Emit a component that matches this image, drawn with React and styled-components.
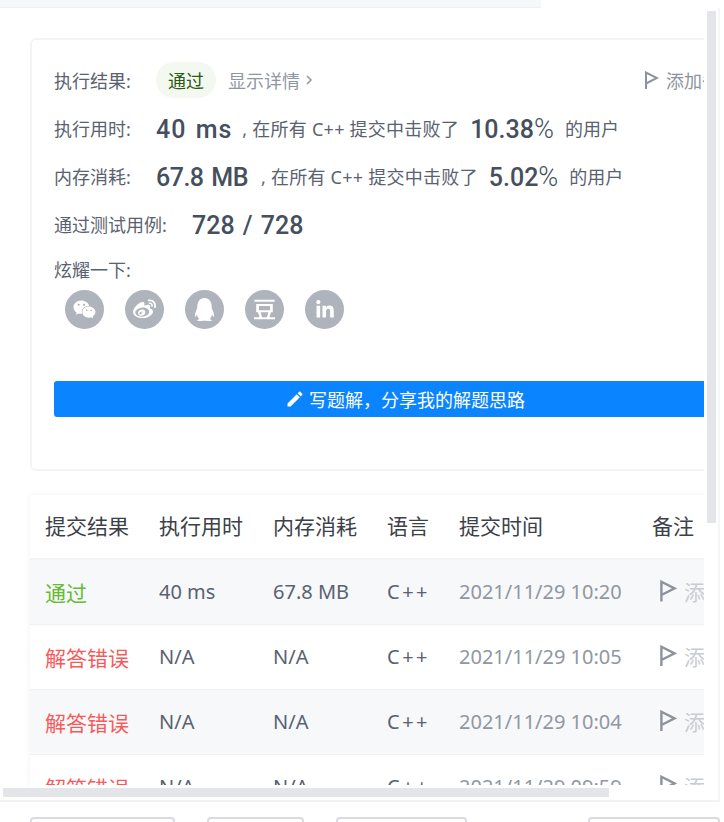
import styled, { createGlobalStyle } from "styled-components";
import { FaWeixin, FaWeibo, FaQq, FaLinkedinIn } from "react-icons/fa";
import { SiDouban } from "react-icons/si";
import { MdEdit } from "react-icons/md";

const Global = createGlobalStyle`
  html, body { margin: 0; padding: 0; background: #fff; }
  body { font-family: "Noto Sans", "Noto Sans CJK SC", sans-serif; overflow: hidden; }
  * { box-sizing: border-box; }
`;

const Page = styled.div`
  position: relative;
  width: 724px;
  height: 822px;
  overflow: hidden;
`;

const TopStrip = styled.div`
  width: 541px;
  height: 8px;
  background: #f7f8fa;
  border-bottom: 1px solid #eff0f2;
`;

const Panel = styled.div`
  width: 720px;
  height: 794px;
  border-right: 2px solid #f5f6f8;
  border-bottom: 2px solid #f2f3f5;
`;

const Scroller = styled.div`
  width: 704px;
  height: 777px;
  padding: 30px 0 0 30px;
  overflow: hidden;
`;

const Card = styled.section`
  width: 750px;
  height: 433px;
  padding: 20px 22px;
  border: 2px solid #f3f4f6;
  border-radius: 6px;
  color: #5a6270;
  font-size: 18px;
`;

const Row = styled.div`
  display: flex;
  align-items: center;
  height: 40px;
  margin-bottom: 8px;
  white-space: nowrap;
`;

const Label = styled.span`
  width: ${(p) => p.$w || 102}px;
  flex: none;
`;

const Pill = styled.span`
  display: inline-flex;
  align-items: center;
  justify-content: center;
  width: 60px;
  height: 36px;
  border-radius: 18px;
  background: #f3f8f0;
  color: #2c5a10;
`;

const Detail = styled.span`
  margin-left: 12px;
  color: #9097a1;
`;

const FlagNote = styled.span`
  display: inline-flex;
  align-items: center;
  gap: 7px;
  margin-left: auto;
  margin-right: 18px;
  color: #8d939c;
`;

const Big = styled.span`
  padding-top: 2px;
  font-family: Roboto, sans-serif;
  font-weight: 500;
  font-size: 25px;
  word-spacing: 2px;
  letter-spacing: ${(p) => p.$ls || 0}px;
  color: #454f5e;
`;

const Percent = styled(Big)`
  margin: 0 11px 0 11px;
`;

const PercentSign = styled.span`
  font-size: 27px;
  font-weight: 300;
`;

const Note = styled.span`
  margin-left: ${(p) => p.$gap || 10}px;
  letter-spacing: 0.25px;
`;

const Share = styled.div`
  margin-top: 11px;
  height: 30px;
  line-height: 30px;
`;

const Socials = styled.div`
  display: flex;
  gap: 21px;
  margin: 5px 0 0 11px;
`;

const Social = styled.span`
  display: flex;
  align-items: center;
  justify-content: center;
  width: 39px;
  height: 39px;
  border-radius: 50%;
  background: #aeb3bc;
  color: #fff;
  font-size: ${(p) => p.$size || 23}px;
`;

const WriteButton = styled.button`
  display: flex;
  align-items: center;
  justify-content: center;
  gap: 4px;
  width: 702px;
  height: 36px;
  margin-top: 52px;
  border: 0;
  border-radius: 3px;
  background: #0a84ff;
  color: #fff;
  font-family: inherit;
  font-size: 18px;
`;

const Table = styled.table`
  width: 750px;
  margin-top: 24px;
  border-collapse: collapse;
  table-layout: fixed;
  box-shadow: 0 0 6px rgba(0, 0, 0, 0.06);
  font-size: 20px;
  color: #5a6270;
`;

const Th = styled.th`
  height: 64px;
  padding: 0 0 3px 15px;
  width: ${(p) => p.$w}px;
  text-align: left;
  font-weight: 400;
  font-size: 21px;
  color: #3c4048;
  border-bottom: 2px solid #f3f4f6;
`;

const Tr = styled.tr`
  height: 65px;
  background: ${(p) => (p.$odd ? "#f7f8fa" : "#fff")};
  border-bottom: 1px solid #f0f1f3;
`;

const Td = styled.td`
  padding: 0 0 0 15px;
  white-space: nowrap;
  color: ${(p) => p.$color || "inherit"};
  font-size: ${(p) => (p.$status ? 21 : 20)}px;
  letter-spacing: ${(p) => (p.$spaced ? 2.5 : 0)}px;
`;

const TableFlag = styled.span`
  display: inline-flex;
  align-items: center;
  gap: 7px;
  padding-left: 7px;
  color: #c9ccd2;
  font-size: 21px;
`;

const VBar = styled.div`
  position: absolute;
  left: 707px;
  top: 11px;
  width: 9px;
  height: 512px;
  background: #e4e5e9;
`;

const HBar = styled.div`
  position: absolute;
  left: 3px;
  top: 788px;
  width: 606px;
  height: 9px;
  background: #e4e5e9;
`;

const Footer = styled.footer`
  display: flex;
  gap: 32px;
  width: 720px;
  height: 20px;
  padding: 15px 0 0 30px;
`;

const FootButton = styled.div`
  flex: none;
  width: ${(p) => p.$w}px;
  height: 30px;
  margin-left: ${(p) => (p.$end ? "auto" : "0")};
  border: 2px solid #d9dbe1;
  border-radius: 4px;
  background: #fff;
`;

const Flag = ({ size = 18, color = "#8d939c" }) => (
  <svg width={size} height={size * 1.2} viewBox="0 0 15 18" fill="none" stroke={color} strokeWidth="2">
    <path d="M2 18V1.5L13 7 2 12.5" />
  </svg>
);

const Chevron = styled.svg`
  width: 8px;
  height: 10px;
  margin-left: 5px;
`;

const rows = [
  { status: "通过", color: "#66bb33", time: "40 ms", mem: "67.8 MB", at: "2021/11/29 10:20" },
  { status: "解答错误", color: "#f85a5a", time: "N/A", mem: "N/A", at: "2021/11/29 10:05" },
  { status: "解答错误", color: "#f85a5a", time: "N/A", mem: "N/A", at: "2021/11/29 10:04" },
  { status: "解答错误", color: "#f85a5a", time: "N/A", mem: "N/A", at: "2021/11/29 09:59" },
];

export default function App() {
  return (
    <Page>
      <Global />
      <TopStrip />
      <Panel>
        <Scroller>
          <Card>
            <Row>
              <Label>执行结果:</Label>
              <Pill>通过</Pill>
              <Detail>显示详情</Detail>
              <Chevron viewBox="0 0 8 10" fill="none" stroke="#9097a1" strokeWidth="1.5">
                <path d="M2 1l4 4-4 4" />
              </Chevron>
              <FlagNote>
                <Flag size={15} />
                添加备注
              </FlagNote>
            </Row>
            <Row>
              <Label>执行用时:</Label>
              <Big $ls={1}>40 ms</Big>
              <Note>, 在所有 C++ 提交中击败了</Note>
              <Percent>10.38<PercentSign>%</PercentSign></Percent>
              的用户
            </Row>
            <Row>
              <Label>内存消耗:</Label>
              <Big $ls={-0.5}>67.8 MB</Big>
              <Note $gap={13}>, 在所有 C++ 提交中击败了</Note>
              <Percent>5.02<PercentSign>%</PercentSign></Percent>
              的用户
            </Row>
            <Row>
              <Label $w={138}>通过测试用例:</Label>
              <Big>728 / 728</Big>
            </Row>
            <Share>炫耀一下:</Share>
            <Socials>
              <Social><FaWeixin /></Social>
              <Social><FaWeibo /></Social>
              <Social><FaQq /></Social>
              <Social $size={21}><SiDouban /></Social>
              <Social $size={20}><FaLinkedinIn /></Social>
            </Socials>
            <WriteButton>
              <MdEdit size={20} />
              写题解，分享我的解题思路
            </WriteButton>
          </Card>
          <Table>
            <thead>
              <tr>
                <Th $w={114}>提交结果</Th>
                <Th $w={114}>执行用时</Th>
                <Th $w={114}>内存消耗</Th>
                <Th $w={72}>语言</Th>
                <Th $w={193}>提交时间</Th>
                <Th $w={143}>备注</Th>
              </tr>
            </thead>
            <tbody>
              {rows.map((r, i) => (
                <Tr key={i} $odd={i % 2 === 0}>
                  <Td $status $color={r.color}>{r.status}</Td>
                  <Td>{r.time}</Td>
                  <Td>{r.mem}</Td>
                  <Td $spaced>C++</Td>
                  <Td $color="#9097a1">{r.at}</Td>
                  <Td>
                    <TableFlag>
                      <Flag size={18} />
                      添加备注
                    </TableFlag>
                  </Td>
                </Tr>
              ))}
            </tbody>
          </Table>
        </Scroller>
      </Panel>
      <VBar />
      <HBar />
      <Footer>
        <FootButton $w={145} />
        <FootButton $w={97} />
        <FootButton $w={131} />
        <FootButton $w={132} $end />
      </Footer>
    </Page>
  );
}
